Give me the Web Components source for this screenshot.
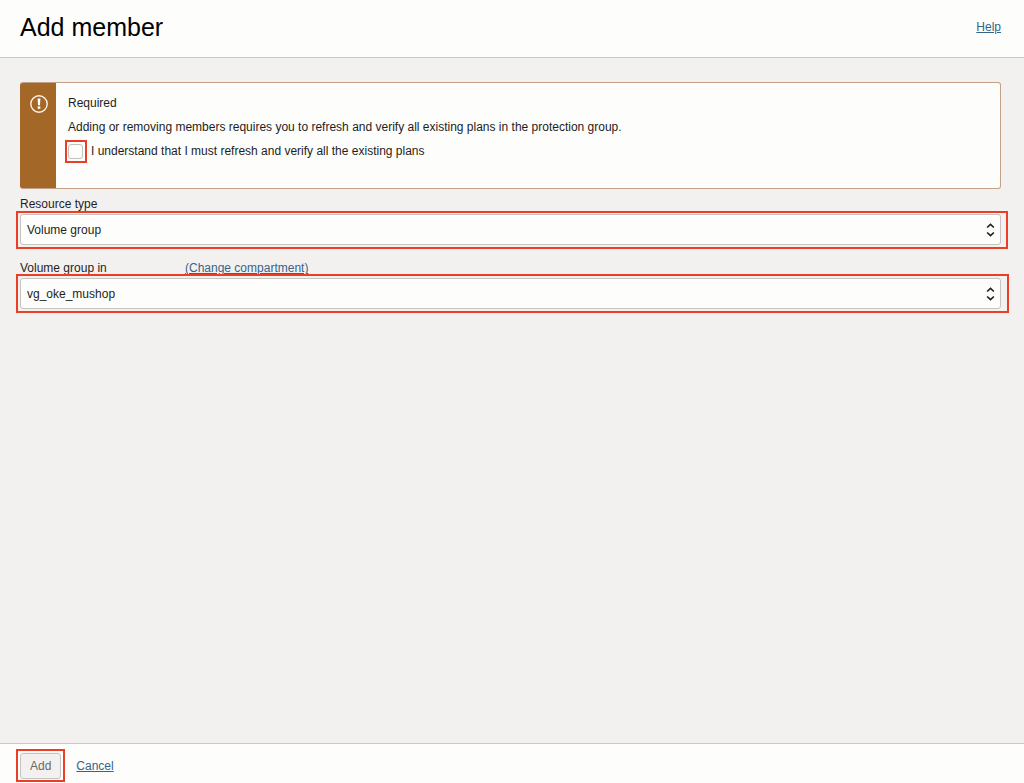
<!DOCTYPE html>
<html lang="en">
<head>
<meta charset="utf-8">
<meta name="viewport" content="width=device-width, initial-scale=1">
<title>Add member</title>
<style>
  body {
    margin: 0;
    font: 12px/16px "Liberation Sans", Arial, sans-serif;
    color: #1f1e1c;
    --surface: #fdfdfb;
    --canvas: #f3f1f0;
    --rule: #c9c8c4;
    --link: #33658a;
    --warn: #a36727;
    --mark: #ea3e26;
  }
</style>
</head>
<body>
<add-member-page></add-member-page>

<script>
const define = (name, html, init) => {
  const template = document.createElement('template');
  template.innerHTML = html;
  customElements.define(name, class extends HTMLElement {
    constructor() {
      super();
      this.attachShadow({ mode: 'open' }).append(template.content.cloneNode(true));
    }
    connectedCallback() { if (init) init(this, this.shadowRoot); }
  });
};

/* Red frame laid over whatever it wraps */
define('mark-frame', `
  <style>
    :host { display: block; position: relative; }
    .frame {
      position: absolute; inset: var(--frame-inset, -4px);
      border: 2px solid var(--mark); pointer-events: none;
    }
  </style>
  <slot></slot><div class="frame"></div>`);

define('text-link', `
  <style>
    :host { display: inline-block; }
    a { color: var(--link); text-decoration: underline; text-underline-offset: 1px; }
  </style>
  <a href="#"><slot></slot></a>`);

define('page-header', `
  <style>
    :host {
      display: block; background: var(--surface);
      border-bottom: 1px solid var(--rule); padding: 11px 23px 14px 20px;
    }
    header { display: flex; align-items: center; justify-content: space-between; }
    h1 { margin: 0; font-size: 25px; line-height: 32px; font-weight: 400; color: #000; }
  </style>
  <header><h1><slot></slot></h1><slot name="action"></slot></header>`);

define('warning-panel', `
  <style>
    :host {
      display: grid; grid-template-columns: 36px 1fr; overflow: hidden;
      background: var(--surface); border: 1px solid #c3a189; border-left: 0;
      border-radius: 3px; box-sizing: border-box;
    }
    .side { background: var(--warn); padding: 12px 0 0 10px; }
    svg { display: block; }
    .body { display: flex; flex-direction: column; gap: 8px; padding: 12px 12px 29px; }
  </style>
  <div class="side">
    <svg width="18" height="18" viewBox="0 0 18 18" fill="none" aria-hidden="true">
      <circle cx="9" cy="9" r="8.2" stroke="#fbf3ea" stroke-width="1.4"/>
      <path d="M7.6 3.4h2.8l-.4 6.8H8z" fill="#fff"/>
      <rect x="7.7" y="11.4" width="2.6" height="2.4" fill="#fff"/>
    </svg>
  </div>
  <div class="body"><slot></slot></div>`);

define('check-field', `
  <style>
    :host { display: flex; align-items: center; gap: 8px; }
    mark-frame { --frame-inset: -4px -4px -4px -3px; }
    input {
      appearance: none; display: block; box-sizing: border-box; margin: 0;
      width: 15px; height: 15px; background: var(--surface);
      border: 1px solid #c4c2c0; border-radius: 3px;
    }
    input:checked { background: var(--link); }
  </style>
  <mark-frame><input type="checkbox" id="check"></mark-frame>
  <label for="check"><slot></slot></label>`);

define('select-field', `
  <style>
    :host { display: block; }
    .head { display: flex; padding-bottom: 2px; }
    .label { min-width: 165px; }
    mark-frame { --frame-inset: var(--select-inset, -3px -7px -4px -4px); }
    .box { position: relative; }
    select {
      appearance: none; display: block; width: 100%; height: 31px; box-sizing: border-box;
      margin: 0; padding: 0 32px 0 6px; font: inherit; color: #1f1e1c;
      background: var(--surface); border: 1px solid #c6c3c1; border-radius: 3px;
    }
    svg { position: absolute; right: 6px; top: 9px; pointer-events: none; }
  </style>
  <div class="head">
    <div class="label"><label for="select"></label></div>
    <slot name="hint"></slot>
  </div>
  <mark-frame>
    <div class="box">
      <select id="select"></select>
      <svg width="9" height="14" viewBox="0 0 9 14" fill="none" stroke="#1f1e1c" stroke-width="1.6" aria-hidden="true">
        <path d="M1.1 4.5 4.5 1.3 7.9 4.5M1.1 9.5 4.5 12.7 7.9 9.5"/>
      </svg>
    </div>
  </mark-frame>`,
  (host, root) => {
    root.querySelector('label').textContent = host.getAttribute('label');
    root.querySelector('select').replaceChildren(new Option(host.getAttribute('value')));
  });

define('form-actions', `
  <style>
    :host {
      display: flex; align-items: center; gap: 15px; padding: 9px 20px 4px;
      background: var(--surface); border-top: 1px solid var(--rule);
    }
    button {
      display: block; box-sizing: border-box; height: 26px; margin: 0; padding: 0 9px;
      font: inherit; color: #6a6866; background: var(--canvas);
      border: 1px solid #c6c3c1; border-radius: 3px;
    }
    mark-frame { --frame-inset: -4px -4px -3px -4px; }
  </style>
  <mark-frame><button type="button">Add</button></mark-frame>
  <text-link>Cancel</text-link>`);

define('add-member-page', `
  <style>
    :host { display: flex; flex-direction: column; min-height: 100vh; background: var(--canvas); }
    main { flex: 1; padding: 24px 23px 24px 20px; }
    p { margin: 0; }
    warning-panel { margin-bottom: 7px; }
    select-field + select-field { margin-top: 15px; --select-inset: -4px -8px -4px -4px; }
  </style>
  <page-header>Add member<text-link slot="action">Help</text-link></page-header>
  <main>
    <warning-panel>
      <p>Required</p>
      <p>Adding or removing members requires you to refresh and verify all existing plans in the protection group.</p>
      <check-field>I understand that I must refresh and verify all the existing plans</check-field>
    </warning-panel>
    <select-field label="Resource type" value="Volume group"></select-field>
    <select-field label="Volume group in" value="vg_oke_mushop">
      <text-link slot="hint">(Change compartment)</text-link>
    </select-field>
  </main>
  <form-actions></form-actions>`);
</script>
</body>
</html>
